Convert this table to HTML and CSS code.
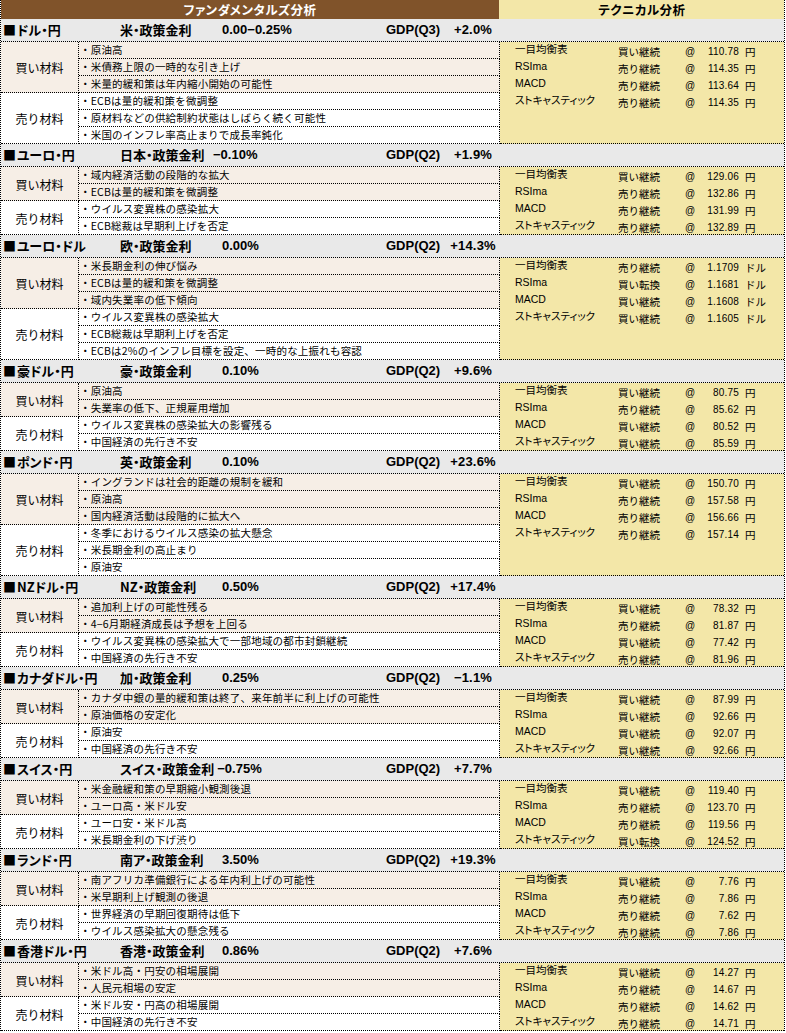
FILE: index.html
```html
<!DOCTYPE html>
<html lang="ja">
<head>
<meta charset="utf-8">
<title>ファンダメンタルズ分析</title>
<link rel="stylesheet" href="styles.css">
</head>
<body>
<div class="sheet">
  <div class="title">
    <div class="t-fund">ファンダメンタルズ分析</div>
    <div class="t-tech">テクニカル分析</div>
  </div>

  <section class="sec">
    <div class="head"><span class="pair"><span class="sq">■</span>ドル・円</span><span class="policy"><span class="plabel">米・政策金利</span><span class="rate pos">0.00−0.25%</span></span><span class="gdp">GDP(Q3)</span><span class="gval">+2.0%</span></div>
    <div class="tech t6">
      <span class="nm">一目均衡表</span><span class="sg">買い継続</span><span class="at">@</span><span class="vl">110.78</span><span class="un">円</span>
      <span class="nm">RSIma</span><span class="sg">売り継続</span><span class="at">@</span><span class="vl">114.35</span><span class="un">円</span>
      <span class="nm">MACD</span><span class="sg">売り継続</span><span class="at">@</span><span class="vl">113.64</span><span class="un">円</span>
      <span class="nm">ストキャスティック</span><span class="sg">売り継続</span><span class="at">@</span><span class="vl">114.35</span><span class="un">円</span>
    </div>
    <div class="lbl buy s3">買い材料</div>
    <div class="item buy">・原油高</div>
    <div class="item buy">・米債務上限の一時的な引き上げ</div>
    <div class="item buy">・米量的緩和策は年内縮小開始の可能性</div>
    <div class="lbl s3">売り材料</div>
    <div class="item">・ECBは量的緩和策を微調整</div>
    <div class="item">・原材料などの供給制約状態はしばらく続く可能性</div>
    <div class="item">・米国のインフレ率高止まりで成長率鈍化</div>
  </section>

  <section class="sec">
    <div class="head"><span class="pair"><span class="sq">■</span>ユーロ・円</span><span class="policy"><span class="plabel">日本・政策金利</span><span class="rate">−0.10%</span></span><span class="gdp">GDP(Q2)</span><span class="gval">+1.9%</span></div>
    <div class="tech t4">
      <span class="nm">一目均衡表</span><span class="sg">買い継続</span><span class="at">@</span><span class="vl">129.06</span><span class="un">円</span>
      <span class="nm">RSIma</span><span class="sg">売り継続</span><span class="at">@</span><span class="vl">132.86</span><span class="un">円</span>
      <span class="nm">MACD</span><span class="sg">売り継続</span><span class="at">@</span><span class="vl">131.99</span><span class="un">円</span>
      <span class="nm">ストキャスティック</span><span class="sg">売り継続</span><span class="at">@</span><span class="vl">132.89</span><span class="un">円</span>
    </div>
    <div class="lbl buy s2">買い材料</div>
    <div class="item buy">・域内経済活動の段階的な拡大</div>
    <div class="item buy">・ECBは量的緩和策を微調整</div>
    <div class="lbl s2">売り材料</div>
    <div class="item">・ウイルス変異株の感染拡大</div>
    <div class="item">・ECB総裁は早期利上げを否定</div>
  </section>

  <section class="sec">
    <div class="head"><span class="pair"><span class="sq">■</span>ユーロ・ドル</span><span class="policy"><span class="plabel">欧・政策金利</span><span class="rate pos">0.00%</span></span><span class="gdp">GDP(Q2)</span><span class="gval">+14.3%</span></div>
    <div class="tech t6">
      <span class="nm">一目均衡表</span><span class="sg">売り継続</span><span class="at">@</span><span class="vl">1.1709</span><span class="un">ドル</span>
      <span class="nm">RSIma</span><span class="sg">買い転換</span><span class="at">@</span><span class="vl">1.1681</span><span class="un">ドル</span>
      <span class="nm">MACD</span><span class="sg">買い継続</span><span class="at">@</span><span class="vl">1.1608</span><span class="un">ドル</span>
      <span class="nm">ストキャスティック</span><span class="sg">買い継続</span><span class="at">@</span><span class="vl">1.1605</span><span class="un">ドル</span>
    </div>
    <div class="lbl buy s3">買い材料</div>
    <div class="item buy">・米長期金利の伸び悩み</div>
    <div class="item buy">・ECBは量的緩和策を微調整</div>
    <div class="item buy">・域内失業率の低下傾向</div>
    <div class="lbl s3">売り材料</div>
    <div class="item">・ウイルス変異株の感染拡大</div>
    <div class="item">・ECB総裁は早期利上げを否定</div>
    <div class="item">・ECBは2%のインフレ目標を設定、一時的な上振れも容認</div>
  </section>

  <section class="sec">
    <div class="head"><span class="pair"><span class="sq">■</span>豪ドル・円</span><span class="policy"><span class="plabel">豪・政策金利</span><span class="rate pos">0.10%</span></span><span class="gdp">GDP(Q2)</span><span class="gval">+9.6%</span></div>
    <div class="tech t4">
      <span class="nm">一目均衡表</span><span class="sg">買い継続</span><span class="at">@</span><span class="vl">80.75</span><span class="un">円</span>
      <span class="nm">RSIma</span><span class="sg">売り継続</span><span class="at">@</span><span class="vl">85.62</span><span class="un">円</span>
      <span class="nm">MACD</span><span class="sg">買い継続</span><span class="at">@</span><span class="vl">80.52</span><span class="un">円</span>
      <span class="nm">ストキャスティック</span><span class="sg">買い継続</span><span class="at">@</span><span class="vl">85.59</span><span class="un">円</span>
    </div>
    <div class="lbl buy s2">買い材料</div>
    <div class="item buy">・原油高</div>
    <div class="item buy">・失業率の低下、正規雇用増加</div>
    <div class="lbl s2">売り材料</div>
    <div class="item">・ウイルス変異株の感染拡大の影響残る</div>
    <div class="item">・中国経済の先行き不安</div>
  </section>

  <section class="sec">
    <div class="head"><span class="pair"><span class="sq">■</span>ポンド・円</span><span class="policy"><span class="plabel">英・政策金利</span><span class="rate pos">0.10%</span></span><span class="gdp">GDP(Q2)</span><span class="gval">+23.6%</span></div>
    <div class="tech t6">
      <span class="nm">一目均衡表</span><span class="sg">買い継続</span><span class="at">@</span><span class="vl">150.70</span><span class="un">円</span>
      <span class="nm">RSIma</span><span class="sg">売り継続</span><span class="at">@</span><span class="vl">157.58</span><span class="un">円</span>
      <span class="nm">MACD</span><span class="sg">売り継続</span><span class="at">@</span><span class="vl">156.66</span><span class="un">円</span>
      <span class="nm">ストキャスティック</span><span class="sg">売り継続</span><span class="at">@</span><span class="vl">157.14</span><span class="un">円</span>
    </div>
    <div class="lbl buy s3">買い材料</div>
    <div class="item buy">・イングランドは社会的距離の規制を緩和</div>
    <div class="item buy">・原油高</div>
    <div class="item buy">・国内経済活動は段階的に拡大へ</div>
    <div class="lbl s3">売り材料</div>
    <div class="item">・冬季におけるウイルス感染の拡大懸念</div>
    <div class="item">・米長期金利の高止まり</div>
    <div class="item">・原油安</div>
  </section>

  <section class="sec">
    <div class="head"><span class="pair"><span class="sq">■</span>NZドル・円</span><span class="policy"><span class="plabel">NZ・政策金利</span><span class="rate pos">0.50%</span></span><span class="gdp">GDP(Q2)</span><span class="gval">+17.4%</span></div>
    <div class="tech t4">
      <span class="nm">一目均衡表</span><span class="sg">買い継続</span><span class="at">@</span><span class="vl">78.32</span><span class="un">円</span>
      <span class="nm">RSIma</span><span class="sg">売り継続</span><span class="at">@</span><span class="vl">81.87</span><span class="un">円</span>
      <span class="nm">MACD</span><span class="sg">買い継続</span><span class="at">@</span><span class="vl">77.42</span><span class="un">円</span>
      <span class="nm">ストキャスティック</span><span class="sg">売り継続</span><span class="at">@</span><span class="vl">81.96</span><span class="un">円</span>
    </div>
    <div class="lbl buy s2">買い材料</div>
    <div class="item buy">・追加利上げの可能性残る</div>
    <div class="item buy">・4−6月期経済成長は予想を上回る</div>
    <div class="lbl s2">売り材料</div>
    <div class="item">・ウイルス変異株の感染拡大で一部地域の都市封鎖継続</div>
    <div class="item">・中国経済の先行き不安</div>
  </section>

  <section class="sec">
    <div class="head"><span class="pair"><span class="sq">■</span>カナダドル・円</span><span class="policy"><span class="plabel">加・政策金利</span><span class="rate pos">0.25%</span></span><span class="gdp">GDP(Q2)</span><span class="gval">−1.1%</span></div>
    <div class="tech t4">
      <span class="nm">一目均衡表</span><span class="sg">買い継続</span><span class="at">@</span><span class="vl">87.99</span><span class="un">円</span>
      <span class="nm">RSIma</span><span class="sg">買い継続</span><span class="at">@</span><span class="vl">92.66</span><span class="un">円</span>
      <span class="nm">MACD</span><span class="sg">買い継続</span><span class="at">@</span><span class="vl">92.07</span><span class="un">円</span>
      <span class="nm">ストキャスティック</span><span class="sg">買い継続</span><span class="at">@</span><span class="vl">92.66</span><span class="un">円</span>
    </div>
    <div class="lbl buy s2">買い材料</div>
    <div class="item buy">・カナダ中銀の量的緩和策は終了、来年前半に利上げの可能性</div>
    <div class="item buy">・原油価格の安定化</div>
    <div class="lbl s2">売り材料</div>
    <div class="item">・原油安</div>
    <div class="item">・中国経済の先行き不安</div>
  </section>

  <section class="sec">
    <div class="head"><span class="pair"><span class="sq">■</span>スイス・円</span><span class="policy"><span class="plabel">スイス・政策金利</span><span class="rate">−0.75%</span></span><span class="gdp">GDP(Q2)</span><span class="gval">+7.7%</span></div>
    <div class="tech t4">
      <span class="nm">一目均衡表</span><span class="sg">買い継続</span><span class="at">@</span><span class="vl">119.40</span><span class="un">円</span>
      <span class="nm">RSIma</span><span class="sg">売り継続</span><span class="at">@</span><span class="vl">123.70</span><span class="un">円</span>
      <span class="nm">MACD</span><span class="sg">売り継続</span><span class="at">@</span><span class="vl">119.56</span><span class="un">円</span>
      <span class="nm">ストキャスティック</span><span class="sg">買い転換</span><span class="at">@</span><span class="vl">124.52</span><span class="un">円</span>
    </div>
    <div class="lbl buy s2">買い材料</div>
    <div class="item buy">・米金融緩和策の早期縮小観測後退</div>
    <div class="item buy">・ユーロ高・米ドル安</div>
    <div class="lbl s2">売り材料</div>
    <div class="item">・ユーロ安・米ドル高</div>
    <div class="item">・米長期金利の下げ渋り</div>
  </section>

  <section class="sec">
    <div class="head"><span class="pair"><span class="sq">■</span>ランド・円</span><span class="policy"><span class="plabel">南ア・政策金利</span><span class="rate pos">3.50%</span></span><span class="gdp">GDP(Q2)</span><span class="gval">+19.3%</span></div>
    <div class="tech t4">
      <span class="nm">一目均衡表</span><span class="sg">買い継続</span><span class="at">@</span><span class="vl">7.76</span><span class="un">円</span>
      <span class="nm">RSIma</span><span class="sg">売り継続</span><span class="at">@</span><span class="vl">7.86</span><span class="un">円</span>
      <span class="nm">MACD</span><span class="sg">売り継続</span><span class="at">@</span><span class="vl">7.62</span><span class="un">円</span>
      <span class="nm">ストキャスティック</span><span class="sg">売り継続</span><span class="at">@</span><span class="vl">7.86</span><span class="un">円</span>
    </div>
    <div class="lbl buy s2">買い材料</div>
    <div class="item buy">・南アフリカ準備銀行による年内利上げの可能性</div>
    <div class="item buy">・米早期利上げ観測の後退</div>
    <div class="lbl s2">売り材料</div>
    <div class="item">・世界経済の早期回復期待は低下</div>
    <div class="item">・ウイルス感染拡大の懸念残る</div>
  </section>

  <section class="sec">
    <div class="head"><span class="pair"><span class="sq">■</span>香港ドル・円</span><span class="policy"><span class="plabel">香港・政策金利</span><span class="rate pos">0.86%</span></span><span class="gdp">GDP(Q2)</span><span class="gval">+7.6%</span></div>
    <div class="tech t4">
      <span class="nm">一目均衡表</span><span class="sg">買い継続</span><span class="at">@</span><span class="vl">14.27</span><span class="un">円</span>
      <span class="nm">RSIma</span><span class="sg">売り継続</span><span class="at">@</span><span class="vl">14.67</span><span class="un">円</span>
      <span class="nm">MACD</span><span class="sg">売り継続</span><span class="at">@</span><span class="vl">14.62</span><span class="un">円</span>
      <span class="nm">ストキャスティック</span><span class="sg">売り継続</span><span class="at">@</span><span class="vl">14.71</span><span class="un">円</span>
    </div>
    <div class="lbl buy s2">買い材料</div>
    <div class="item buy">・米ドル高・円安の相場展開</div>
    <div class="item buy">・人民元相場の安定</div>
    <div class="lbl s2">売り材料</div>
    <div class="item">・米ドル安・円高の相場展開</div>
    <div class="item">・中国経済の先行き不安</div>
  </section>
</div>
</body>
</html>
```

FILE: styles.css
```css
* { box-sizing: border-box; }

html, body {
  margin: 0;
  padding: 0;
  background: #ffffff;
}

body {
  font-family: "Noto Sans CJK JP", "Liberation Sans", sans-serif;
  color: #000;
}

.sheet {
  width: 785px;
  border-left: 1px dotted #000;
  border-right: 1px dotted #000;
}

.title {
  display: grid;
  grid-template-columns: 498px 1fr;
  height: 19px;
  font-weight: bold;
  font-size: 12.5px;
  line-height: 19px;
  text-align: center;
  font-feature-settings: "palt";
}

.t-fund {
  background: #80532a;
  color: #ffffff;
  letter-spacing: 0.5px;
}

.t-tech {
  background: #f3e7a8;
  color: #000;
  border-left: 1px solid #f3e7a8;
  letter-spacing: 0.5px;
}

.sec {
  display: grid;
  grid-template-columns: 78px 421px 1fr;
  grid-template-rows: 23px;
  grid-auto-rows: 17px;
}

.head {
  grid-column: 1 / -1;
  grid-row: 1;
  background: #e9e9e9;
  border-bottom: 1px dotted #000;
  display: grid;
  grid-template-columns: 119px 266px 62px 50px;
  align-items: center;
  font-weight: bold;
  font-size: 13px;
  font-family: "Liberation Sans", "Noto Sans CJK JP", sans-serif;
  font-feature-settings: "palt";
  line-height: 22px;
  white-space: nowrap;
}

.pair {
  padding-left: 2px;
  font-family: "Noto Sans CJK JP", sans-serif;
  font-feature-settings: "palt";
}

.sq {
  font-family: "Noto Sans CJK JP", sans-serif;
  margin-right: 1px;
}

.policy {
  display: flex;
}

.plabel {
  min-width: 90px;
  font-family: "Noto Sans CJK JP", sans-serif;
  font-feature-settings: "palt";
}

.rate {
  margin-left: 3px;
}

.rate.pos {
  padding-left: 9px;
}

.gval {
  text-align: center;
  letter-spacing: 0.2px;
}

.lbl {
  grid-column: 1;
  border-right: 1px dotted #000;
  border-bottom: 1px dotted #000;
  display: flex;
  align-items: center;
  justify-content: center;
  font-size: 12px;
  padding-top: 1px;
  background: #ffffff;
}

.s2 { grid-row: span 2; }
.s3 { grid-row: span 3; }

.item {
  grid-column: 2;
  border-right: 1px dotted #000;
  border-bottom: 1px dotted #000;
  font-size: 10.5px;
  line-height: 16px;
  padding-left: 1px;
  white-space: nowrap;
  overflow: hidden;
  background: #ffffff;
  letter-spacing: 0.2px;
}

.buy {
  background: #f6eee6;
}

.tech {
  grid-column: 3;
  background: #f3e7a8;
  border-bottom: 1px dotted #000;
  display: grid;
  grid-template-columns: 103px 67px 13px 41px auto;
  grid-auto-rows: 17px;
  align-content: start;
  padding-left: 15px;
  font-size: 10.5px;
  line-height: 17px;
  white-space: nowrap;
}

.t4 { grid-row: 2 / span 4; }
.t6 { grid-row: 2 / span 6; }

.nm {
  font-feature-settings: "palt";
  font-family: "Liberation Sans", "Noto Sans CJK JP", sans-serif;
  font-size: 10.5px;
  line-height: 15px;
}

.sg {
  font-size: 10.5px;
  padding-top: 1px;
}

.at {
  font-family: "Liberation Sans", sans-serif;
  font-size: 10px;
  padding-top: 1px;
}

.vl {
  font-family: "Liberation Sans", sans-serif;
  font-size: 10px;
  text-align: right;
  padding-top: 1px;
  letter-spacing: 0.2px;
}

.un {
  padding-left: 6px;
  font-size: 10.5px;
  padding-top: 1px;
}
```
